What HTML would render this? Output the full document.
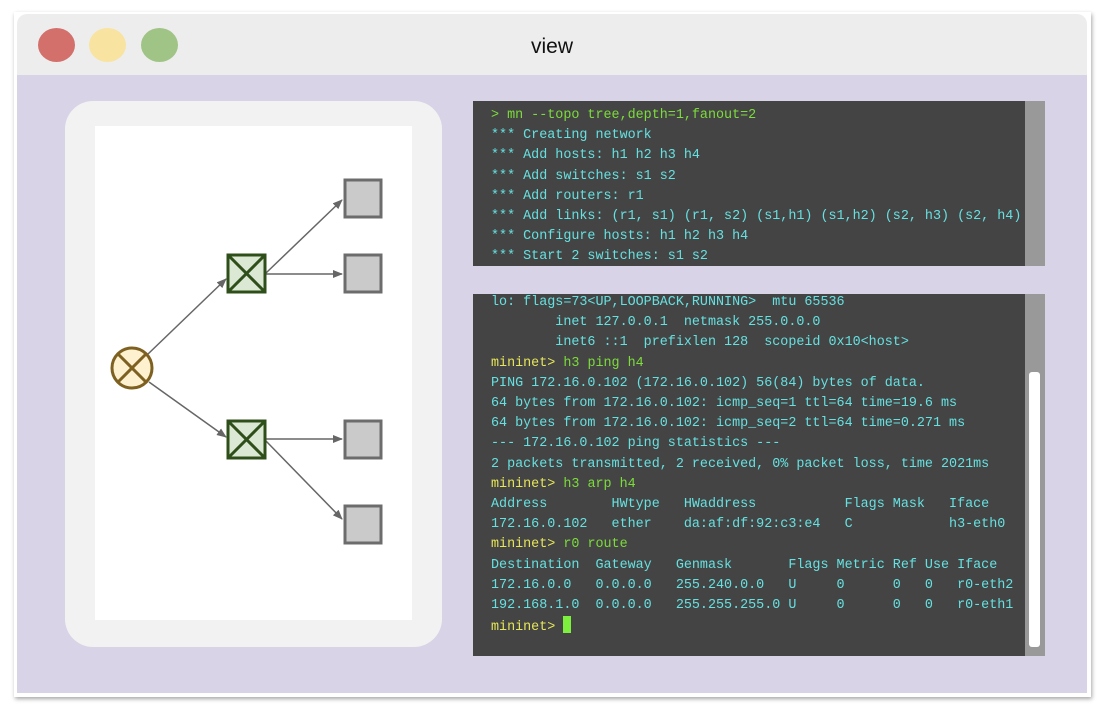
<!DOCTYPE html>
<html><head><meta charset="utf-8"><style>
*{margin:0;padding:0;box-sizing:border-box}
body{width:1100px;height:708px;background:#fff;position:relative;overflow:hidden;font-family:"Liberation Sans",sans-serif}
.win{position:absolute;left:14px;top:12px;width:1077px;height:685px;background:#fff;box-shadow:1px 2px 4px rgba(0,0,0,.35)}
.title{position:absolute;left:17px;top:14px;width:1070px;height:61px;background:#ededed;border-radius:10px 10px 0 0}
.body{position:absolute;left:17px;top:75px;width:1070px;height:618px;background:#d8d3e6}
.dot{position:absolute;top:28px;width:37px;height:34px;border-radius:50%}
.t{position:absolute;left:0;width:1104px;top:35px;text-align:center;font-size:21px;color:#111}
.panel{position:absolute;left:65px;top:101px;width:377px;height:546px;background:#f2f2f2;border-radius:28px}
.inner{position:absolute;left:95px;top:126px;width:317px;height:494px;background:#fff}
.term{position:absolute;left:473px;width:572px;background:#444;font-family:"Liberation Mono","DejaVu Sans Mono",monospace;font-size:13.4px;line-height:20.2px;color:#66e0e0;white-space:pre;padding-left:18px}
.sb{position:absolute;right:0;top:0;width:20px;height:100%;background:#999}
.y{color:#e6e65a}.g{color:#7cdc3c}
.cur{display:inline-block;width:8px;height:17px;background:#7cf03c;vertical-align:-3px}
</style></head><body>
<div class="win"></div>
<div class="title"></div>
<div class="dot" style="left:38px;background:#d4706c"></div>
<div class="dot" style="left:89px;background:#f9e3a0"></div>
<div class="dot" style="left:141px;background:#a0c386"></div>
<div class="t">view</div>
<div class="body"></div>
<div class="panel"></div>
<div class="inner"></div>
<svg style="position:absolute;left:0;top:0" width="1100" height="708">
<defs><marker id="a" markerWidth="10" markerHeight="8" refX="9" refY="4" orient="auto" markerUnits="userSpaceOnUse"><path d="M0,0 L10,4 L0,8 Z" fill="#666"/></marker></defs>
<g stroke="#666" stroke-width="1.5" fill="none" marker-end="url(#a)">
<line x1="148" y1="354" x2="226" y2="279"/>
<line x1="149" y1="382" x2="226" y2="437"/>
<line x1="266" y1="273" x2="342" y2="200"/>
<line x1="266" y1="274" x2="342" y2="274"/>
<line x1="266" y1="439" x2="342" y2="439"/>
<line x1="266" y1="441" x2="342" y2="519"/>
</g>
<circle cx="132" cy="368" r="20" fill="#fdf1cf" stroke="#7e6020" stroke-width="3"/>
<g stroke="#7e6020" stroke-width="3"><line x1="118" y1="354" x2="146" y2="382"/><line x1="146" y1="354" x2="118" y2="382"/></g>
<g fill="#dbe8d4" stroke="#2f4f1a" stroke-width="3">
<rect x="228" y="255" width="37" height="37"/><rect x="228" y="421" width="37" height="37"/></g>
<g stroke="#2f4f1a" stroke-width="3">
<line x1="228" y1="255" x2="265" y2="292"/><line x1="265" y1="255" x2="228" y2="292"/>
<line x1="228" y1="421" x2="265" y2="458"/><line x1="265" y1="421" x2="228" y2="458"/></g>
<g fill="#cacaca" stroke="#6c6c6c" stroke-width="3">
<rect x="345" y="180" width="36" height="37"/><rect x="345" y="255" width="36" height="37"/>
<rect x="345" y="421" width="36" height="37"/><rect x="345" y="506" width="36" height="37"/></g>
</svg>
<div class="term" style="top:101px;height:165px;padding-top:5px"><div class="sb"></div><span class="g">&gt; mn --topo tree,depth=1,fanout=2</span>
*** Creating network
*** Add hosts: h1 h2 h3 h4
*** Add switches: s1 s2
*** Add routers: r1
*** Add links: (r1, s1) (r1, s2) (s1,h1) (s1,h2) (s2, h3) (s2, h4)
*** Configure hosts: h1 h2 h3 h4
*** Start 2 switches: s1 s2</div>
<div class="term" style="top:294px;height:362px;"><div class="sb"><div style="position:absolute;left:4px;top:78px;width:11px;height:275px;background:#fff;border-radius:3px"></div></div><div style="margin-top:-1px">lo: flags=73&lt;UP,LOOPBACK,RUNNING&gt;  mtu 65536
        inet 127.0.0.1  netmask 255.0.0.0
        inet6 ::1  prefixlen 128  scopeid 0x10&lt;host&gt;
<span class="y">mininet&gt;</span> <span class="g">h3 ping h4</span>
PING 172.16.0.102 (172.16.0.102) 56(84) bytes of data.
64 bytes from 172.16.0.102: icmp_seq=1 ttl=64 time=19.6 ms
64 bytes from 172.16.0.102: icmp_seq=2 ttl=64 time=0.271 ms
--- 172.16.0.102 ping statistics ---
2 packets transmitted, 2 received, 0% packet loss, time 2021ms
<span class="y">mininet&gt;</span> <span class="g">h3 arp h4</span>
Address        HWtype   HWaddress           Flags Mask   Iface
172.16.0.102   ether    da:af:df:92:c3:e4   C            h3-eth0
<span class="y">mininet&gt;</span> <span class="g">r0 route</span>
Destination  Gateway   Genmask       Flags Metric Ref Use Iface
172.16.0.0   0.0.0.0   255.240.0.0   U     0      0   0   r0-eth2
192.168.1.0  0.0.0.0   255.255.255.0 U     0      0   0   r0-eth1
<span class="y">mininet&gt;</span> <span class="cur"></span></div></div>
</body></html>
